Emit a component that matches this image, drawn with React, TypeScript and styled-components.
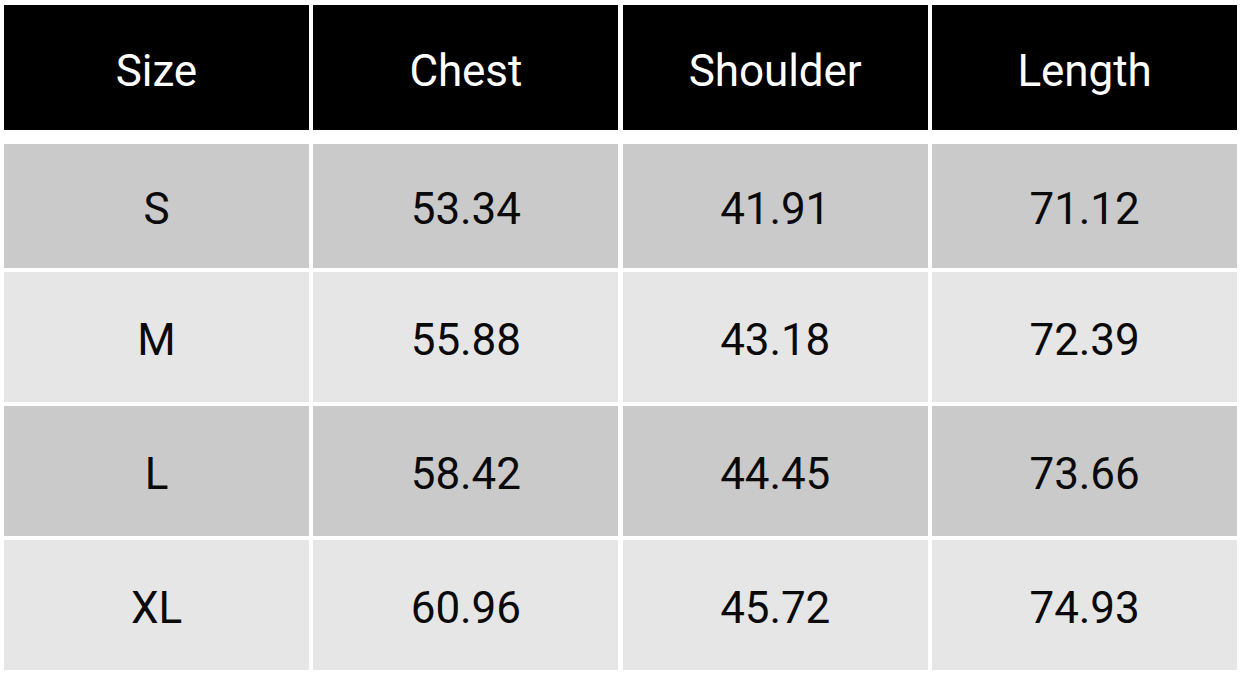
import React from "react";
import styled, { createGlobalStyle } from "styled-components";

const Global = createGlobalStyle`
  html, body { margin: 0; padding: 0; background: #ffffff; }
  body { font-family: Roboto, "Liberation Sans", Arial, sans-serif; }
`;

const Page = styled.div`
  padding: 5px 0 0 4px;
  width: 1249px;
  box-sizing: border-box;
`;

const Table = styled.div`
  width: 1233px;
  display: flex;
  flex-direction: column;
  gap: 4px;
`;

const Row = styled.div<{ $h: number; $mb?: number }>`
  display: grid;
  grid-template-columns: repeat(4, 1fr);
  column-gap: 4.5px;
  height: ${(p) => p.$h}px;
  margin-bottom: ${(p) => p.$mb ?? 0}px;
`;

const Cell = styled.div<{ $tone: "head" | "dark" | "light" }>`
  display: flex;
  align-items: center;
  justify-content: center;
  box-sizing: border-box;
  padding-top: 6px;
  font-size: 44px;
  font-weight: 400;
  letter-spacing: -0.1px;
  background: ${(p) =>
    p.$tone === "head" ? "#000000" : p.$tone === "dark" ? "#cacaca" : "#e6e6e6"};
  color: ${(p) => (p.$tone === "head" ? "#ffffff" : "#0a0a0a")};
`;

const headers = ["Size", "Chest", "Shoulder", "Length"];
const rows = [
  ["S", "53.34", "41.91", "71.12"],
  ["M", "55.88", "43.18", "72.39"],
  ["L", "58.42", "44.45", "73.66"],
  ["XL", "60.96", "45.72", "74.93"],
];
const heights = [124, 130, 130, 130];

export default function App() {
  return (
    <>
      <Global />
      <Page>
        <Table>
          <Row $h={125} $mb={10}>
            {headers.map((h) => (
              <Cell key={h} $tone="head">{h}</Cell>
            ))}
          </Row>
          {rows.map((r, i) => (
            <Row key={r[0]} $h={heights[i]}>
              {r.map((v, j) => (
                <Cell key={j} $tone={i % 2 === 0 ? "dark" : "light"}>{v}</Cell>
              ))}
            </Row>
          ))}
        </Table>
      </Page>
    </>
  );
}
